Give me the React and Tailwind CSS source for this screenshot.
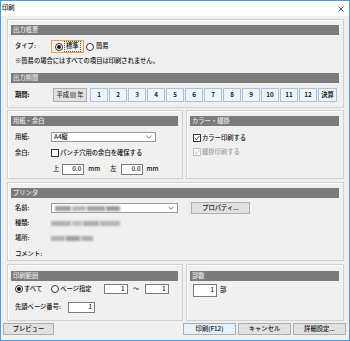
import React from "react";

function Header({ children }) {
  return (
    <div className="h-[10px] bg-[#7b7b7b] text-[#e8e8e8] pl-[2px] flex items-center leading-none">
      {children}
    </div>
  );
}

function Radio({ on }) {
  return (
    <span className="w-[8px] h-[8px] rounded-full border border-[#333333] bg-white flex items-center justify-center shrink-0">
      {on && <span className="w-[4px] h-[4px] rounded-full bg-[#1a1a1a]" />}
    </span>
  );
}

function Check({ checked, disabled }) {
  return (
    <span
      className={
        disabled
          ? "w-[8px] h-[8px] border border-[#c4c4c4] bg-[#f7f7f7] flex items-center justify-center shrink-0"
          : "w-[8px] h-[8px] border border-[#333333] bg-white flex items-center justify-center shrink-0"
      }
    >
      {checked && (
        <svg width="6" height="6" viewBox="0 0 6 6">
          <path
            d="M0.7 3.1 L2.3 4.7 L5.3 1.1"
            fill="none"
            stroke={disabled ? "#b8b8b8" : "#222222"}
            strokeWidth="0.9"
          />
        </svg>
      )}
    </span>
  );
}

function Chevron() {
  return (
    <svg width="6" height="4" viewBox="0 0 6 4" className="shrink-0">
      <path d="M0.5 0.8 L3 3.2 L5.5 0.8" fill="none" stroke="#555555" strokeWidth="0.8" />
    </svg>
  );
}

function Blur({ w, c = "#a8a8a8" }) {
  return <span className="h-[5px] blur-[0.8px] shrink-0" style={{ width: w, background: c }} />;
}

function Btn({ children, className = "" }) {
  return (
    <div
      className={
        "h-[12px] bg-[#e1e1e1] border border-[#adadad] flex items-center justify-center leading-none " +
        className
      }
    >
      {children}
    </div>
  );
}

const boxCls =
  "border border-[#d0d0d0] shadow-[inset_1px_1px_0_#ffffff] pt-[5px] pl-[3px] pr-[4px]";

export default function App() {
  const months = ["1", "2", "3", "4", "5", "6", "7", "8", "9", "10", "11", "12"];
  return (
    <div className="w-[350px] h-[341px] border border-[#4b9be0] bg-[#f0f0f0] flex flex-col font-['Noto_Sans_CJK_JP',sans-serif] font-medium text-[6.3px] text-[#111111] overflow-hidden">
      {/* title bar */}
      <div className="h-[15px] bg-white flex items-center justify-between pl-[1px] pr-[5px] leading-none shrink-0">
        <span>印刷</span>
        <svg width="6" height="6" viewBox="0 0 6 6">
          <path d="M0.5 0.5 L5.5 5.5 M5.5 0.5 L0.5 5.5" stroke="#333333" strokeWidth="0.8" />
        </svg>
      </div>

      <div className="flex flex-col pl-[6px] pr-[5px] pt-[3px]">
        {/* box 1 */}
        <div className={boxCls + " h-[89px]"}>
          <Header>出力帳票</Header>
          <div className="mt-[5px] h-[13px] flex items-center pl-[4px] leading-none">
            <span className="w-[36px]">タイプ:</span>
            <div className="h-[13px] w-[33px] border border-[#e8a33a] flex items-center pl-[3px] gap-[1px]">
              <Radio on />
              <span className="border border-dotted border-[#555555] px-[1px] py-[1px]">標準</span>
            </div>
            <div className="ml-[2px] flex items-center gap-[2px]">
              <Radio />
              <span>簡易</span>
            </div>
          </div>
          <div className="mt-[4px] h-[9px] flex items-center pl-[4px] leading-none">
            ※簡易の場合にはすべての項目は印刷されません。
          </div>
          <div className="mt-[7px]">
            <Header>出力期間</Header>
          </div>
          <div className="mt-[5px] h-[14px] flex items-center pl-[4px] leading-none">
            <span className="w-[38px] font-bold">期間:</span>
            <div className="w-[34px] h-[14px] bg-[#e1e1e1] border border-[#adadad] flex items-center justify-center gap-[1px] text-[#333333]">
              <span>平成</span>
              <span className="w-[6px] h-[6px] bg-[#9a9a9a]" />
              <span>年</span>
            </div>
            <div className="ml-[3px] flex gap-[1px]">
              {months.map((m) => (
                <div
                  key={m}
                  className="w-[18px] h-[14px] border border-[#a9c1da] bg-[#eef4fb] flex items-center justify-center font-bold text-[#1a1a1a]"
                >
                  {m}
                </div>
              ))}
              <div className="w-[19px] h-[14px] border border-[#a9c1da] bg-[#eef4fb] flex items-center justify-center font-bold text-[#1a1a1a]">
                決算
              </div>
            </div>
          </div>
        </div>

        {/* row 2 */}
        <div className="mt-[2px] h-[69px] flex gap-[3px]">
          <div className={boxCls + " w-[176px]"}>
            <Header>用紙・余白</Header>
            <div className="mt-[6px] h-[10px] flex items-center pl-[4px] leading-none">
              <span className="w-[36px]">用紙:</span>
              <div className="w-[105px] h-[10px] bg-white border border-[#9a9a9a] flex items-center justify-between pl-[2px] pr-[3px]">
                <span>A4縦</span>
                <Chevron />
              </div>
            </div>
            <div className="mt-[6px] h-[10px] flex items-center pl-[4px] leading-none">
              <span className="w-[36px]">余白:</span>
              <Check />
              <span className="ml-[1px]">パンチ穴用の余白を確保する</span>
            </div>
            <div className="mt-[6px] h-[11px] flex items-center pl-[4px] leading-none">
              <span className="w-[36px]" />
              <span className="ml-[2px]">上</span>
              <div className="ml-[3px] w-[22px] h-[11px] bg-white border border-[#7a7a7a] flex items-center justify-end pr-[2px]">
                0.0
              </div>
              <span className="ml-[4px]">mm</span>
              <span className="ml-[10px]">左</span>
              <div className="ml-[5px] w-[22px] h-[11px] bg-white border border-[#7a7a7a] flex items-center justify-end pr-[2px]">
                0.0
              </div>
              <span className="ml-[3px]">mm</span>
            </div>
          </div>
          <div className={boxCls + " flex-1 pl-[2px]"}>
            <Header>カラー・綴掛</Header>
            <div className="mt-[7px] h-[10px] flex items-center pl-[3px] gap-[1px] leading-none">
              <Check checked />
              <span>カラー印刷する</span>
            </div>
            <div className="mt-[4px] h-[10px] flex items-center pl-[3px] gap-[1px] leading-none text-[#a0a0a0]">
              <Check checked disabled />
              <span>綴掛印刷する</span>
            </div>
          </div>
        </div>

        {/* printer */}
        <div className={boxCls + " mt-[3px] h-[79px] pt-[4px]"}>
          <Header>プリンタ</Header>
          <div className="mt-[5px] h-[10px] flex items-center pl-[4px] leading-none">
            <span className="w-[36px]">名前:</span>
            <div className="w-[127px] h-[10px] bg-white border border-[#9a9a9a] flex items-center justify-between pl-[3px] pr-[3px]">
              <span className="flex items-center gap-[1px]">
                <Blur w={16} c="#9c9c9c" />
                <Blur w={14} c="#b6b6b6" />
                <Blur w={18} c="#a2a2a2" />
                <Blur w={14} c="#9a9a9a" />
              </span>
              <Chevron />
            </div>
            <Btn className="ml-[13px] w-[59px] h-[11px]">プロパティ...</Btn>
          </div>
          <div className="mt-[5px] h-[10px] flex items-center pl-[4px] leading-none">
            <span className="w-[36px]">種類:</span>
            <span className="flex items-center gap-[1px]">
              <Blur w={20} c="#b0b0b0" />
              <Blur w={10} c="#bdbdbd" />
              <Blur w={16} c="#aaaaaa" />
              <Blur w={20} c="#b4b4b4" />
            </span>
          </div>
          <div className="mt-[5px] h-[10px] flex items-center pl-[4px] leading-none">
            <span className="w-[36px]">場所:</span>
            <span className="flex items-center gap-[1px]">
              <Blur w={14} c="#b2b2b2" />
              <Blur w={14} c="#9e9e9e" />
              <Blur w={12} c="#b0b0b0" />
            </span>
          </div>
          <div className="mt-[6px] h-[10px] flex items-center pl-[4px] leading-none">
            <span className="w-[36px]">コメント:</span>
          </div>
        </div>

        {/* row 4 */}
        <div className="mt-[3px] h-[57px] flex gap-[3px]">
          <div className={boxCls + " w-[176px] pt-[6px]"}>
            <Header>印刷範囲</Header>
            <div className="mt-[3px] h-[10px] flex items-center pl-[4px] leading-none">
              <Radio on />
              <span className="ml-[1px]">すべて</span>
              <span className="ml-[9px]">
                <Radio />
              </span>
              <span className="ml-[1px]">ページ指定</span>
              <div className="ml-[12px] w-[24px] h-[10px] bg-white border border-[#7a7a7a] flex items-center justify-end pr-[2px]">
                1
              </div>
              <span className="w-[17px] text-center">～</span>
              <div className="w-[24px] h-[10px] bg-white border border-[#7a7a7a] flex items-center justify-end pr-[2px]">
                1
              </div>
            </div>
            <div className="mt-[8px] h-[11px] flex items-center pl-[4px] leading-none">
              <span className="w-[53px]">先頭ページ番号:</span>
              <div className="w-[27px] h-[11px] bg-white border border-[#7a7a7a] flex items-center justify-end pr-[2px]">
                1
              </div>
            </div>
          </div>
          <div className={boxCls + " flex-1 pl-[2px] pt-[6px]"}>
            <Header>部数</Header>
            <div className="mt-[3px] h-[13px] flex items-center pl-[3px] leading-none">
              <div className="w-[24px] h-[13px] bg-white border border-[#7a7a7a] flex items-center justify-end pr-[2px]">
                1
              </div>
              <span className="ml-[3px]">部</span>
            </div>
          </div>
        </div>
      </div>

      {/* bottom buttons */}
      <div className="mt-[2px] flex items-center pl-[2px] pr-[3px]">
        <Btn className="w-[51px]">プレビュー</Btn>
        <div className="flex-1" />
        <Btn className="w-[53px] border-[#0078d7] bg-[#e5f1fb]">印刷(F12)</Btn>
        <Btn className="ml-[2px] w-[53px]">キャンセル</Btn>
        <Btn className="ml-[2px] w-[53px]">詳細設定...</Btn>
      </div>
    </div>
  );
}
